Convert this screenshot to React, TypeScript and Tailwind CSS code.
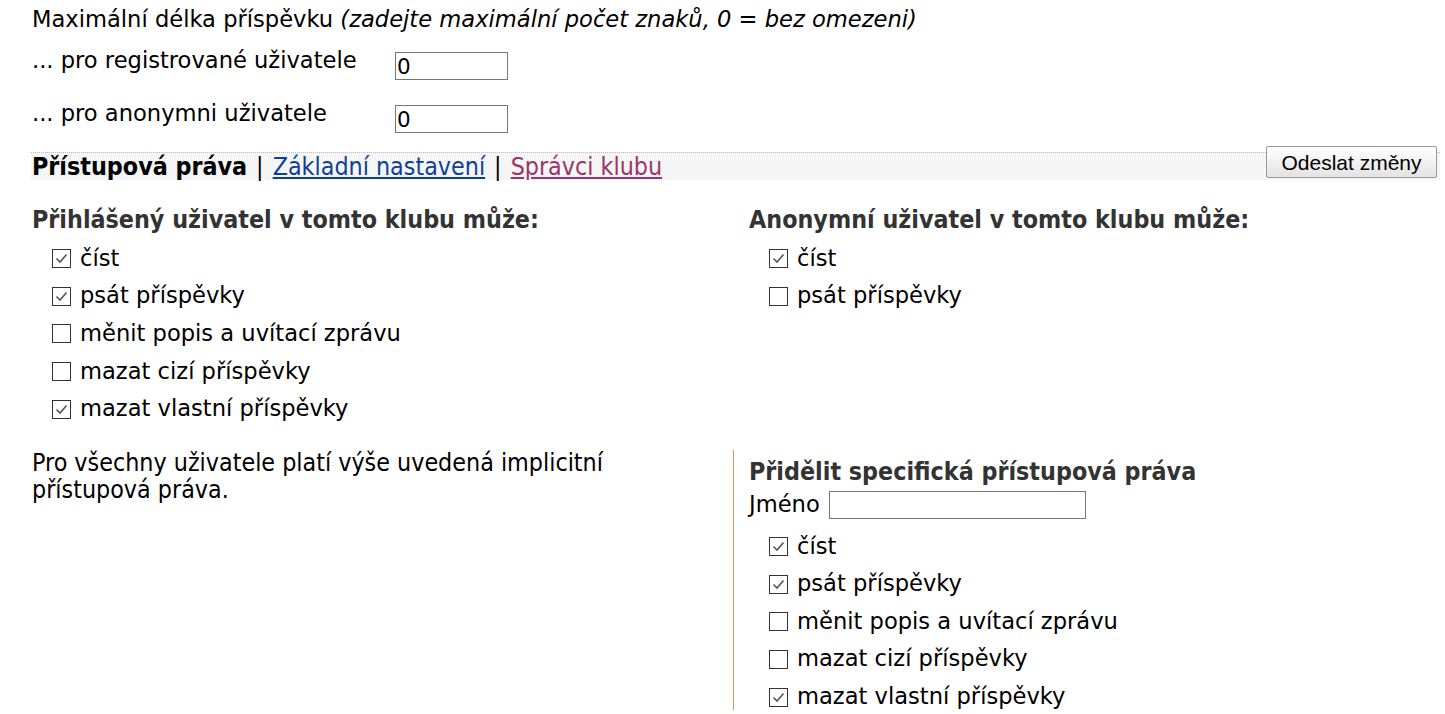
import React from 'react';

type Perm = { label: string; checked: boolean };

const registered: Perm[] = [
  { label: 'číst', checked: true },
  { label: 'psát příspěvky', checked: true },
  { label: 'měnit popis a uvítací zprávu', checked: false },
  { label: 'mazat cizí příspěvky', checked: false },
  { label: 'mazat vlastní příspěvky', checked: true },
];

const anonymous: Perm[] = [
  { label: 'číst', checked: true },
  { label: 'psát příspěvky', checked: false },
];

const verdana = { fontFamily: '"DejaVu Sans", Verdana, sans-serif' };
const tahoma = { fontFamily: '"DejaVu Sans Condensed", Tahoma, "Liberation Sans", sans-serif' };

const CheckBox: React.FC<{ checked: boolean }> = ({ checked }) => (
  <span className="flex h-[19px] w-[19px] shrink-0 items-center justify-center border border-[#333] bg-white">
    {checked && (
      <svg width="13" height="13" viewBox="0 0 13 13" fill="none">
        <path d="M1.5 6.5 L5 10 L11.5 2.5" stroke="#555" strokeWidth="1.6" />
      </svg>
    )}
  </span>
);

const PermList: React.FC<{ items: Perm[] }> = ({ items }) => (
  <div className="flex flex-col pl-[20px]">
    {items.map(item => (
      <label key={item.label} className="flex h-[37.6px] items-center gap-[9px] text-[22.6px] text-black" style={verdana}>
        <CheckBox checked={item.checked} />
        <span>{item.label}</span>
      </label>
    ))}
  </div>
);

const NumberInput: React.FC = () => (
  <div
    className="flex h-[28px] w-[113px] items-end border border-[#767676] bg-white pb-[0px] pl-[1px] text-[21.5px] leading-[25px] text-black"
    style={verdana}
  >
    0
  </div>
);

const App: React.FC = () => {
  return (
    <div className="min-h-[714px] w-[1445px] bg-white pl-[32px] text-black" style={verdana}>
      <div className="flex h-[40px] items-center text-[22.6px]">
        Maximální délka příspěvku&nbsp;<i>(zadejte maximální počet znaků, 0 = bez omezeni)</i>
      </div>

      <div className="flex h-[53px] items-start pt-[6px]">
        <div className="w-[363px] text-[22.6px] leading-[28px]">... pro registrované uživatele</div>
        <div className="pt-[6px]">
          <NumberInput />
        </div>
      </div>
      <div className="flex h-[53px] items-start pt-[6px]">
        <div className="w-[363px] text-[22.6px] leading-[28px]">... pro anonymni uživatele</div>
        <div className="pt-[6px]">
          <NumberInput />
        </div>
      </div>

      <div
        className="relative mt-[6px] ml-[-1px] mr-[5px] flex h-[28px] items-center border-t border-dotted border-[#bbb] bg-[#f5f5f5] pl-[1px] pt-[1px] text-[24.8px]"
        style={tahoma}
      >
        <b className="text-black">Přístupová práva</b>
        <span className="px-[9px]">|</span>
        <a href="#" className="text-[#0d3f9a] underline">Základní nastavení</a>
        <span className="px-[9px]">|</span>
        <a href="#" className="text-[#9b3468] underline">Správci klubu</a>
        <button
          className="absolute right-[3px] top-[-7px] h-[32px] w-[171px] rounded-[2px] border border-[#999] bg-gradient-to-b from-white to-[#e3e3e3] text-[21px] text-black"
          style={{ fontFamily: '"Liberation Sans", Arial, sans-serif' }}
        >
          Odeslat změny
        </button>
      </div>

      <div className="mt-[28px] flex">
        <div className="w-[717px]">
          <h2 className="h-[24px] text-[24.8px] font-bold leading-[24px] text-[#333]" style={tahoma}>
            Přihlášený uživatel v tomto klubu může:
          </h2>
          <div className="mt-[8px]">
            <PermList items={registered} />
          </div>
        </div>
        <div>
          <h2 className="h-[24px] text-[24.8px] font-bold leading-[24px] text-[#333]" style={tahoma}>
            Anonymní uživatel v tomto klubu může:
          </h2>
          <div className="mt-[8px]">
            <PermList items={anonymous} />
          </div>
        </div>
      </div>

      <div className="mt-[22px] flex">
        <div className="w-[701px]">
          <p className="mt-[-1px] w-[620px] text-[24.8px] leading-[27px]" style={tahoma}>
            Pro všechny uživatele platí výše uvedená implicitní přístupová práva.
          </p>
        </div>
        <div className="h-[260px] border-l border-[#e8914a] pl-[15px]">
          <h2 className="mt-[10px] h-[24px] text-[24.8px] font-bold leading-[24px] text-[#333]" style={tahoma}>
            Přidělit specifická přístupová práva
          </h2>
          <div className="mt-[4px] flex items-center gap-[9px] text-[22.6px]">
            <span style={verdana}>Jméno</span>
            <div className="h-[28px] w-[257px] border border-[#767676] bg-white" />
          </div>
          <div className="mt-[6px]">
            <PermList items={registered} />
          </div>
        </div>
      </div>
    </div>
  );
};

export default App;
